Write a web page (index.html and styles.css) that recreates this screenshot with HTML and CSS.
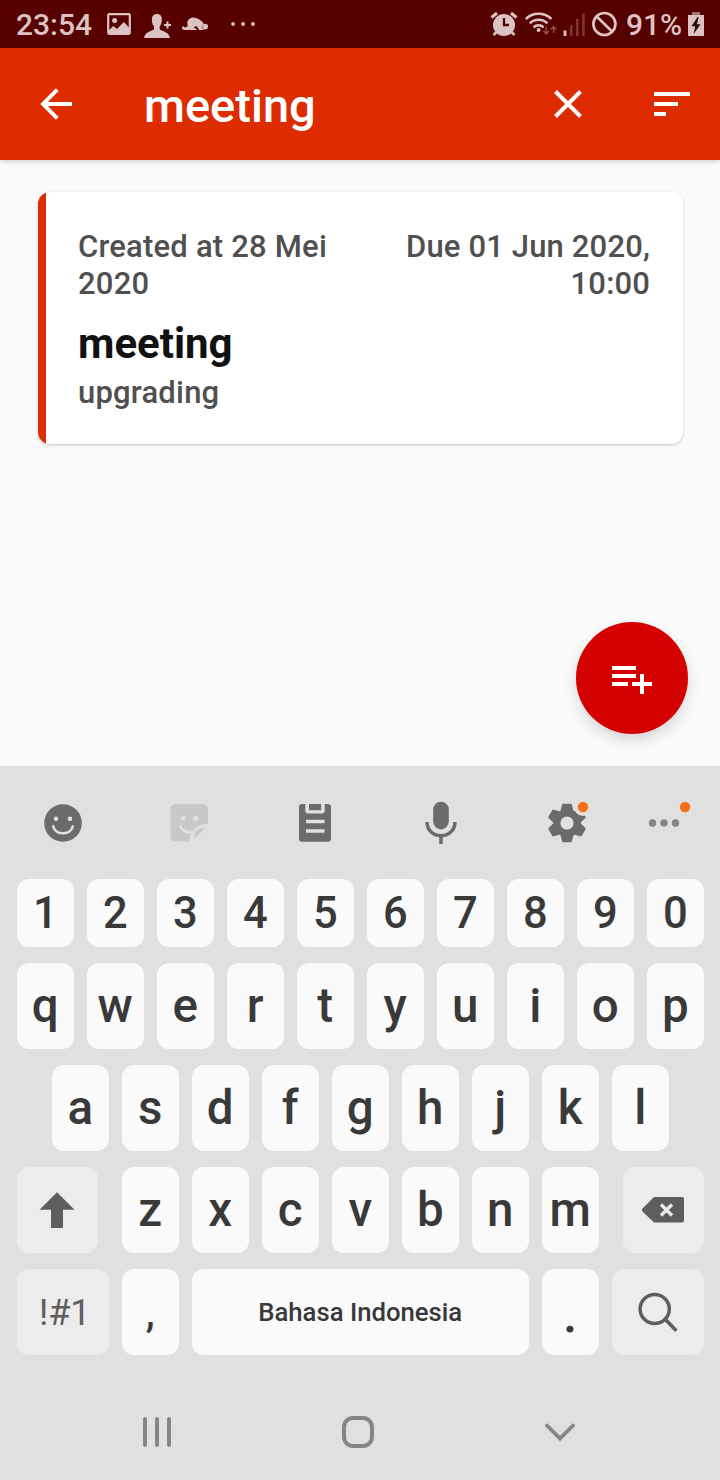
FILE: index.html
```html
<!DOCTYPE html>
<html lang="id">
<head>
<meta charset="utf-8">
<title>meeting</title>
<link rel="stylesheet" href="styles.css">
</head>
<body>
<div class="screen">
  <header class="status">
    <div class="status-left">
      <span class="clock">23:54</span>
      <svg class="status-notes" width="160" height="48" viewBox="100 0 160 48">
        <rect x="108.2" y="14.2" width="21.6" height="19.6" rx="1" fill="none" stroke="currentColor" stroke-width="2.2"/>
        <circle cx="114.6" cy="20.4" r="2.500"/>
        <path d="M109 34v-4l4.500-4 3.500 3 6.800-7 6 6.500V34z"/>
        <path d="M157 14c3.500 0 5 2.200 4.800 5.800-.1 3.700-1 5.400-2.100 6.600v3.200c2.700 1.700 9.300 2.500 10.300 8.400h-26c1-5.900 7.300-6.700 10-8.400v-3.200c-1.300-1.200-2-2.900-2.100-6.600C151.700 16.200 153.500 14 157 14z"/>
        <path d="M164 25h7M167.500 21.500v7" stroke="currentColor" stroke-width="2"/>
        <path d="M187.300 23.500c0-3.800 3-6.300 6.700-6 3.800.4 7.500 3 9.500 5.500l-.5 2.500-1.500 1 2.300 3.500h-4.600l-2.700-4-3 1.200 3 1.800.5 1h-13c-1.700-.5-2.500-2.200-1.700-3.800h1.200l.5 1.200 3.800-.9z"/>
        <circle cx="205.200" cy="26.600" r="2.800"/>
        <circle cx="233" cy="24" r="1.900"/><circle cx="243" cy="24" r="1.900"/><circle cx="253" cy="24" r="1.900"/>
      </svg>
    </div>
    <div class="status-right">
      <svg width="134" height="48" viewBox="488 0 134 48">
        <circle cx="504" cy="25" r="11"/>
        <path d="M491.500 17.500l5.500-4.500M516.500 17.500L511 13" stroke="currentColor" stroke-width="3"/>
        <path d="M496.500 32l-3 3M511.500 32l3 3" stroke="currentColor" stroke-width="2.500"/>
        <path d="M504 18v7h5" fill="none" stroke="#560000" stroke-width="2.300"/>
        <g fill="none" stroke="currentColor" stroke-width="2.500">
          <path d="M525.800 19a18.500 18.500 0 0 1 25.600 0"/>
          <path d="M529.800 23.300a12.500 12.500 0 0 1 17.600 0"/>
          <path d="M533.600 27.300a7 7 0 0 1 10 0"/>
        </g>
        <circle cx="538.600" cy="30" r="1.900"/>
        <path d="M546.200 27v7m-2.700-2.900 2.700 2.900 2.700-2.900M553.600 33v-6.500m-2.700 2.900 2.700-2.900 2.700 2.900" fill="none" stroke="#914f4f" stroke-width="1.500"/>
        <path d="M565 30.500V36" stroke="currentColor" stroke-width="2.800"/>
        <path d="M571.200 25v11M577.200 19v17M583.400 13.500V36" stroke="#7e3434" stroke-width="2.600"/>
        <circle cx="604.400" cy="24" r="11" fill="none" stroke="currentColor" stroke-width="2.700"/>
        <path d="M596.500 16.200l15.800 15.600" stroke="currentColor" stroke-width="2.700"/>
      </svg>
      <span class="percent">91%</span>
      <svg class="battery" width="16" height="48" viewBox="688 0 16 48">
        <path d="M692 12h8v3h-8z" fill="#a56f6f"/><path d="M688 15h16v21h-16z"/>
        <path d="M697.500 17l-6 9.300h3.700l-1.500 7.700 6.900-9.700h-3.700l1.800-7.300z" fill="#2b0b0b"/>
      </svg>
    </div>
  </header>

  <div class="appbar">
    <svg class="back" width="36" height="36" viewBox="38 86 36 36"><path d="M72 104H43M57.300 89.700L43 104l14.300 14.300" fill="none" stroke="#fff" stroke-width="3.900"/></svg>
    <h1 class="query">meeting</h1>
    <svg class="clear" width="36" height="36" viewBox="550 86 36 36"><path d="M555.500 91.500l25 25M580.500 91.500l-25 25" stroke="#fff" stroke-width="3.900"/></svg>
    <svg class="sort" width="36" height="36" viewBox="654 86 36 36"><path d="M654 92h36v4h-36zM654 102h24v4h-24zM654 112h12v4h-12z" fill="#fff"/></svg>
  </div>

  <main class="content">
    <article class="card">
      <div class="dates">
        <p class="created">Created at 28 Mei 2020</p>
        <p class="due">Due 01 Jun 2020, 10:00</p>
      </div>
      <h2 class="card-title">meeting</h2>
      <p class="card-note">upgrading</p>
    </article>
    <button class="fab" aria-label="Add">
      <svg width="40" height="28" viewBox="612 666 40 28"><path d="M612 666h24v4h-24zM612 674h24v4h-24zM612 682h16v4h-16zM640 674h4v8h8v4h-8v8h-4v-8h-8v-4h8z" fill="#fff"/></svg>
    </button>
  </main>

  <section class="keyboard">
    <div class="tools">
      <svg width="126" height="112" viewBox="0 767 126 112">
        <circle cx="63" cy="823" r="18.800"/><circle cx="56" cy="818.800" r="2.300" fill="#e0e0e0"/><circle cx="70" cy="818.800" r="2.300" fill="#e0e0e0"/>
        <path d="M53.200 826.500c2.500 9 17.100 9 19.600 0" fill="none" stroke="#e0e0e0" stroke-width="2.700" stroke-linecap="round"/>
      </svg>
      <svg width="126" height="112" viewBox="126 767 126 112">
        <path d="M175 804.300h28.500a4.500 4.500 0 0 1 4.500 4.500V824c-11 0-17.500 5-18.300 17.500H175a4.500 4.500 0 0 1-4.500-4.500v-28.200a4.500 4.500 0 0 1 4.500-4.500z" fill="#c8c8c8"/>
        <circle cx="183.200" cy="818.300" r="2.500" fill="#e0e0e0"/><circle cx="195.700" cy="818.300" r="2.500" fill="#e0e0e0"/>
        <path d="M180.300 826c1.500 4.500 6 6.800 10.700 6" fill="none" stroke="#e0e0e0" stroke-width="2.800" stroke-linecap="round"/>
        <path d="M205 828l-11 11c-.8-6.500 3.500-11 11-11z" fill="#c8c8c8"/>
      </svg>
      <svg width="126" height="112" viewBox="252 767 126 112">
        <path d="M302 804h3.300v6.500a3 3 0 0 0 3 3h13.400a3 3 0 0 0 3-3V804h3.300a3 3 0 0 1 3 3v31.700a3 3 0 0 1-3 3h-26a3 3 0 0 1-3-3V807a3 3 0 0 1 3-3z"/>
        <path d="M309 804h12.200v6.200H309z"/>
        <path d="M306 821.500h18.500M306 831h18.500" stroke="#e0e0e0" stroke-width="3.600"/>
      </svg>
      <svg width="126" height="112" viewBox="378 767 126 112">
        <rect x="433.200" y="801.800" width="15.600" height="27.600" rx="7.800"/>
        <path d="M427 822c.2 18.300 27.800 18.300 28 0M441 835.500V844" fill="none" stroke="currentColor" stroke-width="3.500"/>
      </svg>
      <svg width="126" height="112" viewBox="504 767 126 112">
        <defs><path id="tooth" d="M563.300 803.800h7.400q1 0 1.200 1l2.100 8.200h-14l2.100-8.200q.2-1 1.200-1z"/></defs>
        <circle cx="567" cy="823" r="13.800"/>
        <use href="#tooth"/><use href="#tooth" transform="rotate(60 567 823)"/><use href="#tooth" transform="rotate(120 567 823)"/><use href="#tooth" transform="rotate(180 567 823)"/><use href="#tooth" transform="rotate(240 567 823)"/><use href="#tooth" transform="rotate(300 567 823)"/>
        <circle cx="567" cy="823" r="6.600" fill="#e0e0e0"/><circle cx="583" cy="807" r="9" fill="#e0e0e0"/><circle cx="583" cy="807" r="5.200" fill="#f57016"/>
      </svg>
      <svg width="90" height="112" viewBox="630 767 90 112">
        <g fill="#858585"><circle cx="652.500" cy="823" r="3.700"/><circle cx="664" cy="823" r="3.700"/><circle cx="675.500" cy="823" r="3.700"/></g>
        <circle cx="685" cy="807" r="5.200" fill="#f57016"/>
      </svg>
    </div>

    <div class="row digits">
      <span class="key">1</span><span class="key">2</span><span class="key">3</span><span class="key">4</span><span class="key">5</span><span class="key">6</span><span class="key">7</span><span class="key">8</span><span class="key">9</span><span class="key">0</span>
    </div>
    <div class="row">
      <span class="key">q</span><span class="key">w</span><span class="key">e</span><span class="key">r</span><span class="key">t</span><span class="key">y</span><span class="key">u</span><span class="key">i</span><span class="key">o</span><span class="key">p</span>
    </div>
    <div class="row">
      <span class="key">a</span><span class="key">s</span><span class="key">d</span><span class="key">f</span><span class="key">g</span><span class="key">h</span><span class="key">j</span><span class="key">k</span><span class="key">l</span>
    </div>
    <div class="row spread">
      <span class="key fn shift"><svg width="36" height="38" viewBox="39 1191 36 38"><path d="M57 1192.300l17.500 17.500H63V1228H51v-18.200H39.500z"/></svg></span>
      <div class="letters"><span class="key">z</span><span class="key">x</span><span class="key">c</span><span class="key">v</span><span class="key">b</span><span class="key">n</span><span class="key">m</span></div>
      <span class="key fn erase"><svg width="42" height="28" viewBox="642 1196 42 28"><path d="M654 1197h28a2 2 0 0 1 2 2v21.500a2 2 0 0 1-2 2h-28L642.500 1211.500q-1-1.500 0-3z"/><path d="M661 1204.500l11 11M672 1204.500l-11 11" stroke="#ececec" stroke-width="3.300"/></svg></span>
    </div>
    <div class="row">
      <span class="key fn symbols">!#1</span><span class="key comma">,</span><span class="key space">Bahasa Indonesia</span><span class="key period">.</span>
      <span class="key fn search"><svg width="42" height="42" viewBox="637 1291 42 42"><circle cx="654.700" cy="1309" r="14.600" fill="none" stroke="currentColor" stroke-width="3.500"/><path d="M665 1319l11.300 11.800" stroke="currentColor" stroke-width="3.500"/></svg></span>
    </div>
  </section>

  <nav class="navbar">
    <svg width="32" height="36" viewBox="141 1414 32 36"><path d="M145 1419v26M157 1419v26M169 1419v26" stroke="currentColor" stroke-width="4" stroke-linecap="round"/></svg>
    <svg width="36" height="36" viewBox="340 1414 36 36"><rect x="344" y="1418" width="28" height="28" rx="9" fill="none" stroke="currentColor" stroke-width="4"/></svg>
    <svg width="36" height="36" viewBox="542 1414 36 36"><path d="M547 1425.500l13 13 13-13" fill="none" stroke="currentColor" stroke-width="3.800" stroke-linecap="round"/></svg>
  </nav>
</div>
</body>
</html>
```

FILE: styles.css
```css
* { box-sizing: border-box; }
body, h1, h2, p { margin: 0; }
svg { display: block; flex: none; fill: currentColor; }

.screen {
  display: flex;
  flex-direction: column;
  width: 720px;
  height: 1480px;
  overflow: hidden;
  background: #fafafa;
  font-family: Roboto, "Liberation Sans", sans-serif;
}

/* system status bar */
.status {
  display: flex;
  justify-content: space-between;
  flex: none;
  height: 48px;
  padding: 0 16px;
  background: #560000;
  color: #dcc3c3;
  font-size: 30px;
  font-weight: 500;
  line-height: 50px;
}
.status-left, .status-right { display: flex; }
.clock { width: 84px; white-space: nowrap; }
.percent { width: 66px; padding-left: 4px; white-space: nowrap; }

/* search bar */
.appbar {
  display: flex;
  align-items: center;
  flex: none;
  height: 112px;
  padding: 0 30px 0 38px;
  background: #dd2c00;
  box-shadow: 0 1px 6px rgba(0, 0, 0, .2);
}
.query {
  flex: 1;
  margin-left: 70px;
  padding-top: 3px;
  color: #fff;
  font-size: 47px;
  font-weight: 500;
  line-height: 52px;
}
.sort { margin-left: 68px; }

/* results */
.content {
  display: flex;
  flex-direction: column;
  flex: none;
  height: 606px;
  padding: 32px 32px 32px 38px;
}
.card {
  width: 644.500px;
  height: 252px;
  padding: 36px 32.500px 0 40px;
  border-radius: 12px;
  background: linear-gradient(to right, #dd2c00 8px, #fff 8px);
  box-shadow: 0 1px 3px rgba(0, 0, 0, .22);
  color: #505050;
  font-size: 31px;
  font-weight: 500;
  letter-spacing: .2px;
  line-height: 37px;
}
.dates { display: flex; justify-content: space-between; }
.created, .due { width: 262px; }
.due { text-align: right; letter-spacing: .15px; }
.card-title {
  margin-top: 17px;
  color: #111;
  font-size: 42px;
  font-weight: 700;
  letter-spacing: 0;
  line-height: 50px;
}
.card-note { margin-top: 5px; }
.fab {
  display: flex;
  align-items: center;
  justify-content: center;
  align-self: flex-end;
  width: 112px;
  height: 112px;
  margin-top: auto;
  padding: 4px 0 0;
  border: 0;
  border-radius: 50%;
  background: #d50000;
  box-shadow: 0 6px 14px rgba(0, 0, 0, .15);
}

/* keyboard */
.keyboard {
  display: flex;
  flex-direction: column;
  flex: none;
  gap: 16.500px;
  height: 618px;
  padding-top: 1px;
  background: #e0e0e0;
}
.tools { display: flex; flex: none; height: 112px; margin-bottom: -16.500px; color: #6b6b6b; }
.row { display: flex; justify-content: center; flex: none; gap: 13.500px; height: 85.500px; padding: 0 16.500px 0 17px; }
.digits { height: 67.500px; }
.spread { justify-content: space-between; gap: 0; }
.letters { display: flex; gap: 13.500px; }
.key {
  display: flex;
  align-items: center;
  justify-content: center;
  flex: none;
  width: 56.500px;
  padding-top: 1px;
  border-radius: 12px;
  background: #fafafa;
  color: #393939;
  font-size: 47.500px;
  font-weight: 500;
  line-height: 56px;
}
.digits .key { padding: 2px 0 0; font-size: 43.500px; }
.fn { background: #ececec; color: #5e5e5e; }
.shift, .erase { width: 80.500px; padding-top: 0; }
.shift { padding-right: 1px; }
.symbols, .search { width: 91.500px; }
.symbols { padding: 2px 0 0 4px; font-size: 36px; font-weight: 400; }
.search { padding-top: 0; }
.comma { padding-top: 5px; font-size: 40px; }
.period { padding-top: 7px; font-size: 52px; }
.space { width: 336.500px; padding-top: 0; font-size: 25.700px; }

/* system navigation */
.navbar {
  display: flex;
  justify-content: space-between;
  flex: none;
  height: 96px;
  padding: 30px 142px 0 141px;
  background: #e0e0e0;
  color: #858585;
}
```
